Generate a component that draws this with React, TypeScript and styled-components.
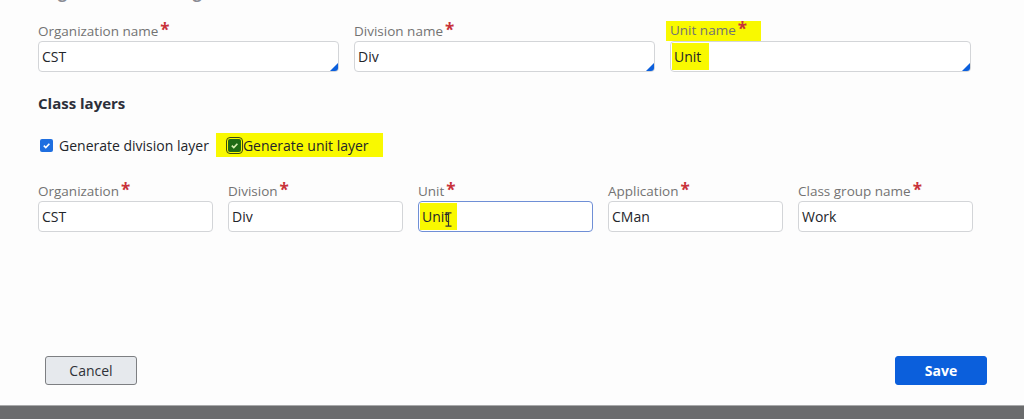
import React from 'react';
import styled, { createGlobalStyle } from 'styled-components';

const colors = {
  page: '#fdfdfd',
  label: '#737373',
  text: '#23252b',
  star: '#c8323a',
  border: '#d3d5d8',
  focus: '#6f8fd6',
  blue: '#0b5fdc',
  marker: '#f9f900',
  bar: '#6b6c6d',
};

const GlobalStyle = createGlobalStyle`
  html, body {
    margin: 0;
    padding: 0;
    background: ${colors.page};
    font-family: 'Open Sans', 'Noto Sans', sans-serif;
  }
  * { box-sizing: border-box; }
`;

const Page = styled.div`
  height: 419px;
  display: flex;
  flex-direction: column;
  overflow: hidden;
  background: ${colors.page};
`;

const Body = styled.div`
  flex: 1;
  padding: 0 52px 0 38px;
  display: flex;
  flex-direction: column;
`;

// page heading scrolled mostly out of view, only its descenders show
const Title = styled.h2`
  margin: -19px 0 0;
  height: 22px;
  font-size: 16px;
  line-height: 22px;
  font-weight: 700;
  color: #8a8c94;
`;

const Row = styled.div<{ cols: number; width: number; top: number }>`
  display: grid;
  grid-template-columns: repeat(${(p) => p.cols}, ${(p) => p.width}px);
  column-gap: 15px;
  margin-top: ${(p) => p.top}px;
`;

const Field = styled.div`
  display: flex;
  flex-direction: column;
`;

const Label = styled.div`
  display: flex;
  align-items: flex-start;
  height: 19px;
  font-size: 13.5px;
  line-height: 18px;
  color: ${colors.label};
`;

const Marked = styled.span`
  background: ${colors.marker};
  padding: 0 14px 1px 4px;
  margin-left: -4px;
  margin-top: -1px;
  line-height: 19px;
`;

const Star = styled.span`
  color: ${colors.star};
  font-size: 17px;
  font-weight: 700;
  line-height: 16px;
  margin-left: 2px;
`;

const Input = styled.div<{ grip?: boolean; focused?: boolean }>`
  position: relative;
  height: 31px;
  border: 1px solid ${(p) => (p.focused ? colors.focus : colors.border)};
  border-radius: 4px;
  background: #fff;
  display: flex;
  align-items: center;
  padding: 0 3px;
  font-size: 14px;
  color: ${colors.text};
  ${(p) =>
    p.grip &&
    `&::after {
      content: '';
      position: absolute;
      right: 0;
      bottom: 0;
      width: 0;
      height: 0;
      border-style: solid;
      border-width: 0 0 8px 8px;
      border-color: transparent transparent ${colors.blue} transparent;
      border-bottom-right-radius: 3px;
    }`}
`;

const Value = styled.span<{ marked?: boolean }>`
  ${(p) =>
    p.marked &&
    `background: ${colors.marker};
     padding: 4px 8px 4px 2px;
     margin-left: -2px;`}
`;

const Caret = styled.svg`
  position: absolute;
  left: 26px;
  top: 10px;
`;

const Section = styled.h3`
  margin: 21px 0 0;
  font-size: 15px;
  line-height: 20px;
  font-weight: 700;
  color: #2c2f3a;
`;

const Checks = styled.div`
  display: flex;
  align-items: center;
  margin-top: 20px;
  height: 24px;
`;

const CheckItem = styled.label<{ marked?: boolean }>`
  display: flex;
  align-items: center;
  gap: 6px;
  font-size: 14px;
  color: ${colors.text};
  ${(p) =>
    p.marked
      ? `background: ${colors.marker};
         height: 24px;
         padding: 0 14px 0 12px;
         margin-left: 7px;
         gap: 2px;`
      : `padding-left: 2px;`}
`;

const Box = styled.span<{ marked?: boolean }>`
  width: 13px;
  height: 13px;
  border-radius: 2px;
  background: ${(p) => (p.marked ? '#1f6a14' : '#1f6fe0')};
  display: inline-flex;
  align-items: center;
  justify-content: center;
  ${(p) => p.marked && `outline: 1.5px solid #3b4a10; outline-offset: 1px;`}
`;

const Footer = styled.div`
  display: flex;
  justify-content: space-between;
  padding: 0 37px 0 45px;
  margin-bottom: 20px;
`;

const Button = styled.button<{ primary?: boolean }>`
  width: 92px;
  height: 29px;
  border-radius: 3px;
  font-family: inherit;
  font-size: 14px;
  cursor: pointer;
  border: 1px solid ${(p) => (p.primary ? colors.blue : '#7d7f82')};
  background: ${(p) => (p.primary ? colors.blue : '#e6e9ed')};
  color: ${(p) => (p.primary ? '#fff' : '#2e3138')};
  font-weight: ${(p) => (p.primary ? 700 : 400)};
`;

const Bar = styled.div`
  height: 14px;
  background: ${colors.bar};
  border-top: 1px solid #a9aaab;
`;

const Tick = ({ dark }: { dark?: boolean }) => (
  <svg width="9" height="9" viewBox="0 0 10 10">
    <path d="M2 5.2l2.2 2.2L8.2 3" fill="none" stroke={dark ? '#d8f0b0' : '#fff'} strokeWidth="1.8" />
  </svg>
);

type FieldDef = { label: string; value: string; marked?: boolean; focused?: boolean };

const top: FieldDef[] = [
  { label: 'Organization name', value: 'CST' },
  { label: 'Division name', value: 'Div' },
  { label: 'Unit name', value: 'Unit', marked: true },
];

const layers: FieldDef[] = [
  { label: 'Organization', value: 'CST' },
  { label: 'Division', value: 'Div' },
  { label: 'Unit', value: 'Unit', marked: true, focused: true },
  { label: 'Application', value: 'CMan' },
  { label: 'Class group name', value: 'Work' },
];

const FormField = ({ f, grip, markLabel }: { f: FieldDef; grip?: boolean; markLabel?: boolean }) => (
  <Field>
    <Label>
      {markLabel && f.marked ? (
        <Marked>
          {f.label}
          <Star>*</Star>
        </Marked>
      ) : (
        <>
          {f.label}
          <Star>*</Star>
        </>
      )}
    </Label>
    <Input grip={grip} focused={f.focused}>
      <Value marked={f.marked}>{f.value}</Value>
      {f.focused && (
        <Caret width="7" height="15" viewBox="0 0 7 15">
          <path d="M0.5 0.8h6M0.5 14.2h6M3.5 0.8v13.4" stroke="#333" strokeWidth="1.2" fill="none" />
        </Caret>
      )}
    </Input>
  </Field>
);

export default function App() {
  return (
    <Page>
      <GlobalStyle />
      <Body>
        <Title>Organization setting</Title>
        <Row cols={3} width={301} top={19}>
          {top.map((f) => (
            <FormField key={f.label} f={f} grip markLabel />
          ))}
        </Row>
        <Section>Class layers</Section>
        <Checks>
          <CheckItem>
            <Box>
              <Tick />
            </Box>
            Generate division layer
          </CheckItem>
          <CheckItem marked>
            <Box marked>
              <Tick dark />
            </Box>
            Generate unit layer
          </CheckItem>
        </Checks>
        <Row cols={5} width={175} top={25}>
          {layers.map((f) => (
            <FormField key={f.label} f={f} />
          ))}
        </Row>
      </Body>
      <Footer>
        <Button>Cancel</Button>
        <Button primary>Save</Button>
      </Footer>
      <Bar />
    </Page>
  );
}
